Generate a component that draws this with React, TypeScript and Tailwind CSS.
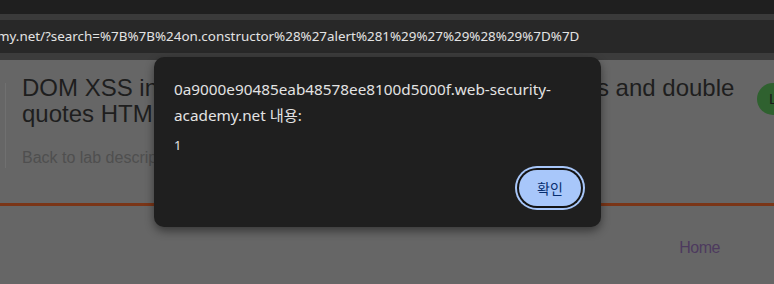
export default function App() {
  return (
    <div className="relative w-[774px] h-[284px] overflow-hidden bg-[#666666] font-['Noto_Sans','Noto_Sans_CJK_KR',sans-serif]">
      {/* Browser chrome */}
      <div className="h-[14px] bg-[#1f1f1f]" />
      <div className="h-[6px] bg-[#3a3a3a]" />
      <div className="h-[33px] bg-[#282828] flex items-center overflow-hidden whitespace-nowrap">
        <span className="-ml-[3px] text-[13.4px] text-[#e3e3e3]">
          my.net/?search=%7B%7B%24on.constructor%28%27alert%281%29%27%29%28%29%7D%7D
        </span>
      </div>
      <div className="h-[7px] bg-[#3c3c3c]" />

      {/* Page behind the dialog (dimmed) */}
      <div className="relative font-['Liberation_Sans',Arial,sans-serif]">
        <div className="h-[143px] flex pt-[23px]">
          <div className="ml-[5px] w-[1px] h-[85px] shrink-0 bg-[#707070]" />
          <div className="ml-[16px] w-[725px] shrink-0">
            <h1 className="text-[24px] leading-[26px] text-[#1e1e1e] -mt-[8px]">
              DOM XSS in AngularJS expression with angle brackets and double quotes HTML-encoded
            </h1>
            <p className="mt-[19px] text-[16px] text-[#4f4f4f]">Back to lab description</p>
          </div>
          <div className="ml-[10px] h-[32px] w-[60px] shrink-0 rounded-full bg-[#2f612f] flex items-center pl-[12px] text-[15px] text-[#1a1a1a]">
            LAB
          </div>
        </div>
        <div className="h-[3px] bg-[#7a3517]" />
        <div className="flex justify-end pr-[54px] pt-[30px]">
          <span className="text-[16px] text-[#4d3a5e] tracking-[-0.5px]">Home</span>
        </div>
      </div>

      {/* Alert dialog */}
      <div className="absolute left-[154px] top-[57px] w-[447px] h-[170px] rounded-[10px] bg-[#1f1f1f] shadow-[0_4px_10px_rgba(0,0,0,0.45)] px-[20px] pt-[19px] flex flex-col">
        <div className="text-[15.3px] leading-[26px] text-[#e3e3e3]">
          0a9000e90485eab48578ee8100d5000f.web-security-
          <br />
          academy.net 내용:
        </div>
        <div className="mt-[8px] text-[13px] leading-[18px] text-[#e3e3e3]">1</div>
        <div className="mt-[16px] flex justify-end">
          <button className="w-[62px] h-[36px] rounded-full bg-[#a8c7fa] text-[14px] text-[#062e6f] shadow-[0_0_0_2px_#141414,0_0_0_4px_#a8c7fa]">
            확인
          </button>
        </div>
      </div>
    </div>
  )
}
